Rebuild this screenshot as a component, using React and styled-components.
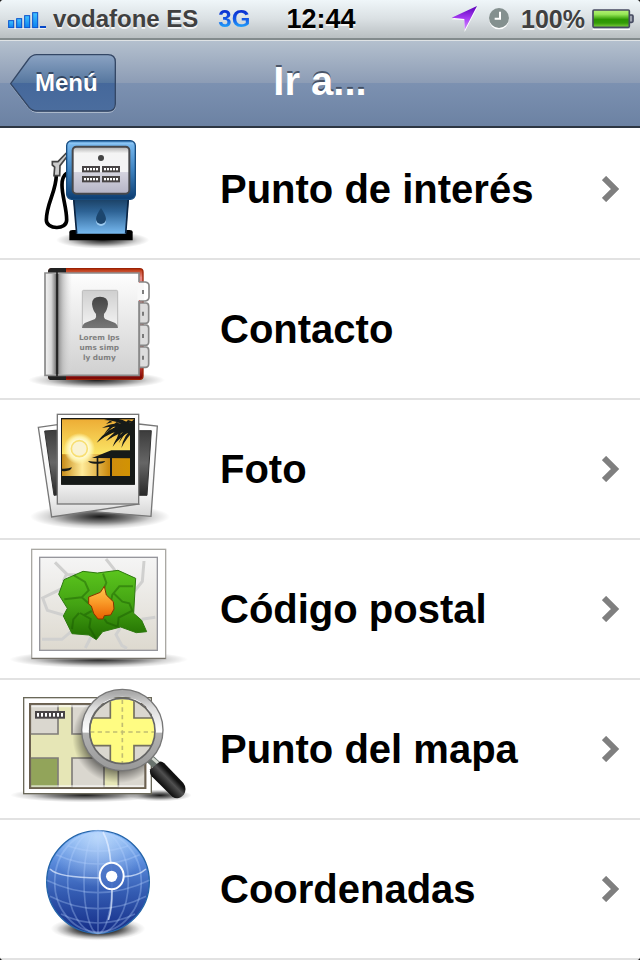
import React from "react";
import styled, { createGlobalStyle } from "styled-components";

const GlobalStyle = createGlobalStyle`
  * {
    box-sizing: border-box;
  }
  body {
    margin: 0;
    background: #1c1c1c;
    font-family: "Liberation Sans", Arial, sans-serif;
  }
`;

const Screen = styled.div`
  background: white;
  border-radius: 4px;
  overflow: hidden;
`;

const StatusBar = styled.div`
  height: 40px;
  padding: 0 6px 0 8px;
  display: grid;
  grid-template-columns: 1fr auto 1fr;
  align-items: center;
  background: linear-gradient(#eff6f9, #dae0e3 50%, #b9bfc2);
  border-bottom: 2px solid #838b8d;
`;

const StatusSide = styled.div`
  display: flex;
  align-items: center;
  justify-content: ${(props) => (props.$end ? "flex-end" : "flex-start")};
`;

const StatusText = styled.span`
  color: #404040;
  font-size: 24px;
  font-weight: bold;
  text-shadow: 0 2px 0 rgba(255, 255, 255, 0.8);
  white-space: nowrap;
`;

const Carrier = styled(StatusText)`
  margin: 0 20px 0 6px;
`;

const Network = styled.span`
  font-size: 24px;
  font-weight: bold;
  background: linear-gradient(#0a2fd0 20%, #1457e6 50%, #22b0ff 85%);
  background-clip: text;
  color: transparent;
`;

const Clock = styled(StatusText)`
  color: black;
  font-size: 27px;
`;

const Battery = styled(StatusText)`
  margin: 0 7px 0 12px;
  font-size: 25px;
`;

const Arrow = styled.svg`
  margin-right: 11px;
`;

const NavBar = styled.header`
  position: relative;
  z-index: 1;
  height: 88px;
  padding: 0 10px 2px;
  display: grid;
  grid-template-columns: 1fr auto 1fr;
  align-items: center;
  background: linear-gradient(#b4c0ce, #8c9cb5 50%, #7c91b1 50%, #6c82a3);
  border-top: 1px solid #dfe3e5;
  border-bottom: 2px solid #2d3642;
`;

const BackButton = styled.button`
  position: relative;
  justify-self: start;
  width: 106px;
  height: 60px;
  padding: 0 19px 0 25px;
  border: 0;
  background: none;
  color: white;
  font: bold 24px "Liberation Sans", Arial, sans-serif;
  text-shadow: 0 -2px 0 rgba(20, 30, 50, 0.6);
`;

const BackShape = styled.svg`
  position: absolute;
  inset: 0;
  z-index: -1;
`;

const Title = styled.h1`
  margin: 0;
  padding-bottom: 4px;
  color: white;
  font-size: 40px;
  line-height: 48px;
  text-shadow: 0 -2px 0 rgba(40, 50, 68, 0.7);
`;

/* the list is scrolled a little way under the bar */
const List = styled.ul`
  margin: -8px 0 0;
  padding: 0;
  list-style: none;
`;

const Item = styled.li`
  border-bottom: 2px solid #e2e2e2;
`;

const ItemButton = styled.button`
  width: 100%;
  height: 138px;
  padding: 0 20px 0 0;
  display: flex;
  align-items: center;
  gap: 20px;
  border: 0;
  background: white;
  text-align: left;
`;

const ItemLabel = styled.span`
  flex: 1;
  color: black;
  font: bold 40px "Liberation Sans", Arial, sans-serif;
`;

const Picture = styled.svg`
  flex: none;
  width: 200px;
  height: 138px;
`;

const Shadow = ({ id, x = 300, y, rx, ry = 22 }) => (
  <>
    <radialGradient id={id}>
      <stop offset="0" stopColor="#000" stopOpacity="0.9" />
      <stop offset="0.45" stopColor="#000" stopOpacity="0.5" />
      <stop offset="0.75" stopColor="#000" stopOpacity="0.16" />
      <stop offset="1" stopColor="#000" stopOpacity="0" />
    </radialGradient>
    <ellipse cx={x} cy={y} rx={rx} ry={ry} fill={`url(#${id})`} />
  </>
);

const Fade = ({ id, stops, flat }) => (
  <linearGradient id={id} x2={flat ? 1 : 0} y2={flat ? 0 : 1}>
    {stops.map(([offset, color]) => (
      <stop key={offset} offset={offset} stopColor={color} />
    ))}
  </linearGradient>
);

const Counter = ({ x, y, count, step = 9, width = 54, height = 19 }) => (
  <g>
    <rect x={x} y={y} width={width} height={height} fill="#484446" />
    {Array.from({ length: count }, (_, i) => (
      <rect key={i} x={x + 6 + i * step} y={y + 6} width="6" height={height - 12} fill="#fff" />
    ))}
  </g>
);

const PumpIcon = () => (
  <Picture viewBox="0 0 600 414" aria-hidden="true">
    <Fade id="pumpHead" stops={[[0, "#2d6ca7"], [0.05, "#79baf0"], [0.5, "#3f83c0"], [1, "#0c3c70"]]} />
    <Fade id="pumpFace" stops={[[0, "#aaa"], [0.14, "#f4f4f4"], [0.54, "#f4f4f6"], [0.55, "#d4d3df"], [1, "#b5b4c6"]]} />
    <Fade id="pumpBase" stops={[[0, "#173a5b"], [0.4, "#2e6395"], [1, "#77b9f0"]]} />
    <Shadow id="pumpShade" x="308" y="360" rx="140" ry="26" />
    <path d="M169 164 C169 215 139 250 139 300 C139 328 200 332 200 300 C200 262 186 230 186 195 Q186 170 200 160" fill="none" stroke="#000" strokeWidth="11" />
    <path d="M199 99 L174 125 H157 V135 L164 141 L162 167 H179 L180 137 L200 111" fill="#ccc" stroke="#444" strokeWidth="5" />
    <path d="M208 346 V337 Q208 330 218 330 H388 Q398 330 398 337 V361 H208z" fill="#000" />
    <path d="M219 230 H387 L378 341 H230z" fill="url(#pumpBase)" />
    <path d="M221 235 L230 341 M385 235 L377 341" stroke="#0b2442" strokeWidth="5" />
    <path d="M303 274 Q288 292 288 303 A15 15 0 0 0 318 303 Q318 292 303 274" fill="#9bcaf0" />
    <path d="M303 264 Q288 286 288 297 A15 15 0 0 0 318 297 Q318 286 303 264" fill="#1c466e" />
    <rect x="200" y="62" width="206" height="176" rx="15" fill="url(#pumpHead)" stroke="#174c80" strokeWidth="4" />
    <path d="M207 70 H399" stroke="#8bc4f2" strokeWidth="5" />
    <rect x="218" y="80" width="170" height="141" rx="11" fill="url(#pumpFace)" stroke="#47484c" strokeWidth="6" />
    <circle cx="303" cy="114" r="9" fill="#444" />
    <Counter x={246} y={138} count={5} />
    <Counter x={306} y={138} count={5} />
    <Counter x={246} y={168} count={5} />
    <Counter x={306} y={168} count={5} />
  </Picture>
);

const ContactIcon = () => (
  <Picture viewBox="0 0 600 414" aria-hidden="true">
    <Fade id="cover" stops={[[0, "#b73005"], [0.08, "#e78a87"], [0.9, "#b8332d"], [1, "#720000"]]} />
    <Fade id="page" stops={[[0, "#fefefe"], [1, "#d0d0d0"]]} />
    <linearGradient id="spine">
      <stop offset="0" stopColor="#eee" />
      <stop offset="0.2" stopColor="#d8d8d8" />
      <stop offset="0.36" stopColor="#888" />
      <stop offset="0.43" stopColor="#222" />
      <stop offset="0.5" stopColor="#999" />
      <stop offset="0.65" stopColor="#bbb" stopOpacity="0.8" />
      <stop offset="1" stopColor="#ddd" stopOpacity="0" />
    </linearGradient>
    <Fade id="portrait" stops={[[0, "#cfcfcf"], [1, "#f4f4f4"]]} />
    <Fade id="person" stops={[[0, "#444"], [1, "#777"]]} />
    <Shadow id="bookShade" x="290" y="360" rx="205" ry="26" />
    <rect x="146" y="26" width="283" height="332" rx="10" fill="url(#cover)" stroke="#9c2206" strokeWidth="4" />
    <path d="M198 24 H155 Q144 24 144 36 V350 Q144 360 155 360 H198z" fill="#222" />
    <path d="M420 66 H436 Q447 68 447 77 V111 Q447 121 436 123 H420" fill="#fff" stroke="#888" strokeWidth="5" />
    {[129, 195, 261].map((y) => (
      <path key={y} d={`M418 ${y} H438 Q446 ${y} 446 ${y + 10} V${y + 51} Q446 ${y + 61} 436 ${y + 61} H418z`} fill="#ddd" stroke="#888" strokeWidth="5" />
    ))}
    <path d="M417 67 V39 H135 V346 H417 V122" fill="url(#page)" stroke="#8a8a8a" strokeWidth="5" />
    <path d="M412 69 H432 V120 H412z" fill="#f8f8f8" />
    <rect x="138" y="42" width="78" height="301" fill="url(#spine)" />
    <path d="M171 31 V349" stroke="#222" strokeWidth="5" />
    {[96, 161, 228, 293].map((y) => (
      <path key={y} d={`M429 ${y - 6} V${y + 6}`} stroke="#666" strokeWidth="5" />
    ))}
    <rect x="247" y="91" width="106" height="112" rx="4" fill="url(#portrait)" stroke="#bbb" strokeWidth="3" />
    <path d="M246 204 Q248 190 260 187 L285 177 Q290 171 288 162 Q278 151 276 132 Q276 110 300 110 Q324 110 324 132 Q322 151 312 162 Q310 171 315 177 L340 187 Q352 190 354 204z" fill="url(#person)" />
    <g fill="#808080" fontFamily='"DejaVu Sans", sans-serif' fontSize="22" fontWeight="bold" textAnchor="middle">
      <text x="298" y="240">Lorem Ips</text>
      <text x="298" y="270">ums simp</text>
      <text x="298" y="300">ly dumy</text>
    </g>
  </Picture>
);

const PhotoIcon = () => (
  <Picture viewBox="0 0 600 414" aria-hidden="true">
    <Fade id="sky" stops={[[0, "#edad35"], [0.55, "#fbe566"], [0.56, "#d89a20"], [1, "#c98608"]]} />
    <Fade id="sea" flat stops={[[0, "#c88c18"], [0.28, "#ffeb9a"], [0.65, "#cd8c10"], [1, "#d39400"]]} />
    <Fade id="frame" stops={[[0, "#fff"], [0.75, "#f5f5f5"], [1, "#d5d5d5"]]} />
    <Fade id="dark" stops={[[0, "#3c3c3c"], [0.5, "#666"], [1, "#292929"]]} />
    <radialGradient id="sunGlow">
      <stop offset="0.5" stopColor="#fffdec" />
      <stop offset="0.75" stopColor="#fff6b0" stopOpacity="0.9" />
      <stop offset="1" stopColor="#fff6b0" stopOpacity="0" />
    </radialGradient>
    <clipPath id="shot">
      <rect x="184" y="56" width="220" height="198" />
    </clipPath>
    <Shadow id="photoShade" x="300" y="350" rx="210" ry="38" />
    <path d="M416 72 L472 78 L453 349 L270 334 L240 80z" fill="url(#frame)" stroke="#777" strokeWidth="4" />
    <path d="M410 92 L454 92 L441 286 H400z" fill="url(#dark)" stroke="#333" strokeWidth="3" />
    <path d="M115 82 L172 74 L416 312 L155 351z" fill="url(#frame)" stroke="#777" strokeWidth="4" />
    <path d="M134 93 L180 90 V284 L162 286z" fill="url(#dark)" stroke="#333" strokeWidth="3" />
    <rect x="172" y="43" width="244" height="269" fill="url(#frame)" stroke="#777" strokeWidth="4" />
    <rect x="183" y="54" width="222" height="200" fill="#1a1a16" />
    <rect x="186" y="58" width="216" height="190" fill="url(#sky)" />
    <rect x="186" y="163" width="216" height="65" fill="url(#sea)" />
    <circle cx="238" cy="146" r="47" fill="url(#sunGlow)" />
    <circle cx="238" cy="146" r="24" fill="#faf3d2" stroke="#f8df72" strokeWidth="5" />
    <g fill="#161a18">
      <path d="M186 228 H404 V254 H184z" />
      <path d="M186 206 Q204 207 216 202 Q211 216 186 213z" />
      <path d="M264 183 Q290 188 316 183 Q309 193 290 191 Q272 193 264 183z" />
      <path d="M276 174 L334 151 H404 V175z" />
      <path d="M290 171 H295 V230 H290z M330 171 H336 V230 H330z M390 100 H404 V230 H390z" />
      <path d="M387 70 Q396 66 402 58 V160 H390 Q392 110 387 70z" />
    </g>
    <g clipPath="url(#shot)" fill="#161a18">
      <path d="M398 76 Q352 44 312 60 Q350 60 390 84z M396 76 Q344 62 306 84 Q348 76 392 86z M394 80 Q330 70 290 128 Q338 86 392 90z M394 84 Q346 84 318 124 Q352 98 394 90z M396 86 Q352 96 338 140 Q362 106 398 92z M398 88 Q372 102 364 144 Q380 112 402 94z" />
      <path d="M330 62 L318 72 L338 66z M350 66 L336 78 L360 70z M334 74 L312 102 L346 76z M350 76 L334 92 L364 78z M326 92 L306 116 L336 86z M340 84 L320 104 L352 84z M346 92 L332 116 L356 88z M358 92 L346 130 L368 90z M372 92 L356 130 L382 90z M384 60 L372 72 L402 66z" />
    </g>
  </Picture>
);

const PostalIcon = () => (
  <Picture viewBox="0 0 600 414" aria-hidden="true">
    <Fade id="paper" stops={[[0, "#f5f5f5"], [1, "#ddd9cf"]]} />
    <Fade id="region" stops={[[0, "#5bc51d"], [0.5, "#43a213"], [1, "#216d00"]]} />
    <Fade id="zone" stops={[[0, "#ffca50"], [0.5, "#f99927"], [1, "#e96000"]]} />
    <Shadow id="postalShade" x="296" y="358" rx="268" ry="26" />
    <rect x="95" y="28" width="402" height="328" fill="#fff" stroke="#aaa9a4" strokeWidth="4" />
    <path d="M95 355 H497" stroke="#77736b" strokeWidth="4" />
    <rect x="119" y="52" width="353" height="279" fill="url(#paper)" stroke="#96969c" strokeWidth="4" />
    <g fill="none" stroke="#d0d0cf" strokeWidth="9">
      <path d="M165 67 L202 104 H230 M201 99 L190 123 M187 145 L128 174 L142 211 L190 225 M318 57 L345 91 M432 63 L427 124 L400 158 M466 232 L425 238 M126 298 H186 L214 274 M273 291 L256 324 M361 264 L348 284 L366 317 L381 325" />
    </g>
    <path d="M192 119 L249 94 L292 99 L354 91 L407 115 L401 220 L425 241 L440 275 L409 278 L362 261 L308 275 L289 299 L267 285 L216 281 L190 228 L202 205 L176 163z" fill="url(#region)" stroke="#2e7910" strokeWidth="3" />
    <g fill="none" stroke="#145000" strokeOpacity="0.4" strokeWidth="6">
      <path d="M222 106 L255 126 L266 151 L245 172 L193 178 M245 172 L267 191 M309 101 L319 128 L312 145 M399 139 H358 L337 164 L333 184 M341 160 L367 185 L388 190 L397 212 L356 233 L353 260 L321 248 L313 237 M275 213 L253 225 M240 219 L272 237 L268 262 L288 296 M237 219 L220 238 L216 267" />
    </g>
    <path d="M313 139 L319 165 L340 185 L342 207 L332 225 L313 227 L309 237 H294 L281 220 L274 198 L266 192 V171 L301 157z" fill="url(#zone)" stroke="#873500" strokeWidth="3" />
  </Picture>
);

const MapIcon = () => (
  <Picture viewBox="0 0 600 414" aria-hidden="true">
    <linearGradient id="glassRing" x2="0" y2="1">
      <stop offset="0" stopColor="#aaa" />
      <stop offset="0.2" stopColor="#ddd" />
      <stop offset="0.53" stopColor="#fff" />
      <stop offset="0.54" stopColor="#b2b2b2" />
      <stop offset="1" stopColor="#9b9b9b" />
    </linearGradient>
    <linearGradient id="handle" x1="0" y1="1" x2="1" y2="0">
      <stop offset="0.3" stopColor="#000" />
      <stop offset="0.52" stopColor="#505050" />
      <stop offset="0.62" stopColor="#111" />
    </linearGradient>
    <radialGradient id="lensShade">
      <stop offset="0.7" stopColor="#000" stopOpacity="0.5" />
      <stop offset="1" stopColor="#000" stopOpacity="0" />
    </radialGradient>
    <clipPath id="sheet">
      <rect x="90" y="72" width="346" height="252" />
    </clipPath>
    <clipPath id="lens">
      <circle cx="367" cy="154" r="97" />
    </clipPath>
    <Shadow id="mapShade" x="255" y="345" rx="225" />
    <Shadow id="handleShade" x="480" y="346" rx="95" ry="18" />
    <rect x="71" y="53" width="383" height="288" fill="#fff" stroke="#6a6859" strokeWidth="4" />
    <rect x="90" y="72" width="346" height="252" fill="#e6e6b6" stroke="#6c6150" strokeWidth="6" />
    <g clipPath="url(#sheet)">
      <g fill="#dad7cf" stroke="#807d79" strokeWidth="5">
        <path d="M91 74 H174 V162 H91z M216 74 H440 V162 H216z" />
        <path d="M91 234 H174 V340 H91z" fill="#92a45a" />
        <path d="M216 234 H312 V340 H216z M355 234 H436 V340 H355z" />
      </g>
      <path d="M94 78 H432 M94 319 H432" stroke="#fff" strokeOpacity="0.6" strokeWidth="7" />
      <circle cx="355" cy="172" r="138" fill="url(#lensShade)" />
    </g>
    <rect x="90" y="72" width="346" height="252" fill="none" stroke="#6c6150" strokeWidth="5" />
    <Counter x={105} y={93} count={7} step={12} width={90} height={23} />
    <path d="M444 231 L474 259" stroke="#69736d" strokeWidth="27" />
    <path d="M447 226 L478 253" stroke="#d2d7cf" strokeWidth="8" />
    <path d="M451 268 L479 245 Q485 243 493 250 L550 309 Q562 325 552 343 Q536 363 517 350 L455 289 Q447 278 451 268z" fill="url(#handle)" />
    <g clipPath="url(#lens)">
      <rect x="268" y="54" width="200" height="200" fill="#fffc82" />
      <path d="M264 50 H331 V114 H264z M402 50 H472 V114 H402z M264 197 H331 V258 H264z M402 197 H472 V258 H402z" fill="#dad7cf" stroke="#74705e" strokeWidth="5" />
      <path d="M367 59 V250 M270 156 H466" stroke="#c1bd72" strokeWidth="5" strokeDasharray="13 10" />
    </g>
    <circle cx="367" cy="150" r="111" fill="none" stroke="url(#glassRing)" strokeWidth="22" />
    <circle cx="367" cy="150" r="122" fill="none" stroke="#777" strokeWidth="4" />
    <circle cx="367" cy="153" r="98" fill="none" stroke="#666" strokeWidth="5" />
  </Picture>
);

const GlobeIcon = () => (
  <Picture viewBox="0 0 600 414" aria-hidden="true">
    <Fade id="ocean" stops={[[0, "#83b8f8"], [0.3, "#5a8bdc"], [0.6, "#345cb2"], [1, "#142c87"]]} />
    <radialGradient id="shine" cx="0.5" cy="0.05" r="0.5">
      <stop offset="0" stopColor="#d7eaff" stopOpacity="0.7" />
      <stop offset="1" stopColor="#d7eaff" stopOpacity="0" />
    </radialGradient>
    <Shadow id="globeShade" x="294" y="326" rx="142" ry="36" />
    <Shadow id="globeCore" x="294" y="328" rx="125" ry="30" />
    <circle cx="294" cy="186" r="154" fill="url(#ocean)" stroke="#2464a9" strokeWidth="4" />
    <circle cx="294" cy="186" r="150" fill="url(#shine)" />
    <g fill="none" stroke="#b9d3ff" strokeOpacity="0.32" strokeWidth="5">
      <ellipse cx="294" cy="186" rx="42" ry="154" />
      <ellipse cx="294" cy="186" rx="91" ry="154" />
      <ellipse cx="294" cy="186" rx="130" ry="150" />
      <path d="M294 33 V340 M205 78 Q294 109 384 78 M169 104 Q294 160 419 104 M140 181 Q294 255 448 181 M150 229 Q294 303 438 229 M183 282 Q294 336 405 282" />
    </g>
    <path d="M150 147 Q175 173 298 174 M372 170 Q415 168 438 147 M309 36 Q328 70 332 128 M336 209 Q337 265 325 300" fill="none" stroke="#e5efff" strokeOpacity="0.7" strokeWidth="5" />
    <ellipse cx="335" cy="168" rx="36" ry="40" fill="#4771c4" fillOpacity="0.8" stroke="#fff" strokeWidth="6" />
    <circle cx="335" cy="169" r="17" fill="#fff" />
  </Picture>
);

const Chevron = () => (
  <svg width="18" height="26" viewBox="0 0 18 26" aria-hidden="true">
    <path d="M2 2 L13 13 L2 24" fill="none" stroke="#7f7f7f" strokeWidth="6" />
  </svg>
);

const SignalIcon = () => (
  <svg width="39" height="20" viewBox="0 0 117 60" aria-hidden="true">
    <Fade id="signal" stops={[[0, "#42c4ff"], [1, "#0a80ef"]]} />
    <path d="M0 60 H114" stroke="#fff" strokeWidth="4" />
    <g fill="url(#signal)" stroke="#0750cc" strokeWidth="3">
      <rect x="2" y="35" width="15" height="21" />
      <rect x="26" y="29" width="15" height="27" />
      <rect x="50" y="20" width="15" height="36" />
      <rect x="74" y="11" width="15" height="45" />
    </g>
    <rect x="96" y="51" width="18" height="6" fill="#0648c8" />
  </svg>
);

const LocationIcon = () => (
  <Arrow width="27" height="28" viewBox="0 0 81 84" aria-hidden="true">
    <Fade id="arrow" stops={[[0, "#5c00b8"], [0.5, "#a43af2"], [1, "#d491ff"]]} />
    <path d="M78 9 L41 81 L40 45 L2 43z" fill="#fff" />
    <path d="M78 3 L41 75 L40 42 L2 38z" fill="url(#arrow)" />
  </Arrow>
);

const AlarmIcon = () => (
  <svg width="20" height="22" viewBox="0 0 60 66" aria-hidden="true">
    <circle cx="30" cy="34" r="30" fill="#fff" />
    <circle cx="30" cy="30" r="30" fill="#84908f" />
    <path d="M33 11 V32 H17" fill="none" stroke="#fff" strokeWidth="6" />
  </svg>
);

const BatteryIcon = () => (
  <svg width="42" height="22" viewBox="0 0 126 66" aria-hidden="true">
    <Fade id="charge" stops={[[0, "#b5ef77"], [0.25, "#96e756"], [0.55, "#2b9600"], [0.75, "#349b08"], [1, "#82d33e"]]} />
    <path d="M2 64 H114" stroke="#fff" strokeWidth="4" />
    <rect x="3" y="6" width="109" height="52" rx="3" fill="url(#charge)" stroke="#454a61" strokeWidth="5" />
    <path d="M114 21 H120 Q123 21 123 25 V40 Q123 43 119 43 H114" fill="#9da2ae" stroke="#454a61" strokeWidth="5" />
  </svg>
);

const Header = () => (
  <NavBar>
    <BackButton type="button">
      <BackShape width="106" height="60" viewBox="0 0 318 180" aria-hidden="true">
        <Fade id="back" stops={[[0, "#8ba3c3"], [0.5, "#56779f"], [0.51, "#45689b"], [1, "#4b6d9e"]]} />
        <path d="M2 95 L56 21 Q66 9 80 9 H294 Q316 9 316 31 V157 Q316 178 294 178 H80 Q66 178 56 165z" fill="none" stroke="#b7c3d3" strokeWidth="3" />
        <path d="M2 92 L56 18 Q66 5 80 5 H294 Q316 5 316 27 V153 Q316 174 294 174 H80 Q66 174 56 162z" fill="url(#back)" stroke="#344765" strokeWidth="4" />
      </BackShape>
      Menú
    </BackButton>
    <Title>Ir a...</Title>
  </NavBar>
);

const App = () => {
  const places = [
    { name: "Punto de interés", Icon: PumpIcon, more: true },
    { name: "Contacto", Icon: ContactIcon },
    { name: "Foto", Icon: PhotoIcon, more: true },
    { name: "Código postal", Icon: PostalIcon, more: true },
    { name: "Punto del mapa", Icon: MapIcon, more: true },
    { name: "Coordenadas", Icon: GlobeIcon, more: true },
  ];
  return (
    <Screen>
      <GlobalStyle />
      <StatusBar>
        <StatusSide>
          <SignalIcon />
          <Carrier>vodafone ES</Carrier>
          <Network>3G</Network>
        </StatusSide>
        <Clock>12:44</Clock>
        <StatusSide $end>
          <LocationIcon />
          <AlarmIcon />
          <Battery>100%</Battery>
          <BatteryIcon />
        </StatusSide>
      </StatusBar>
      <Header />
      <List>
        {places.map(({ name, Icon, more }) => (
          <Item key={name}>
            <ItemButton type="button">
              <Icon />
              <ItemLabel>{name}</ItemLabel>
              {more && <Chevron />}
            </ItemButton>
          </Item>
        ))}
      </List>
    </Screen>
  );
};

export default App;
